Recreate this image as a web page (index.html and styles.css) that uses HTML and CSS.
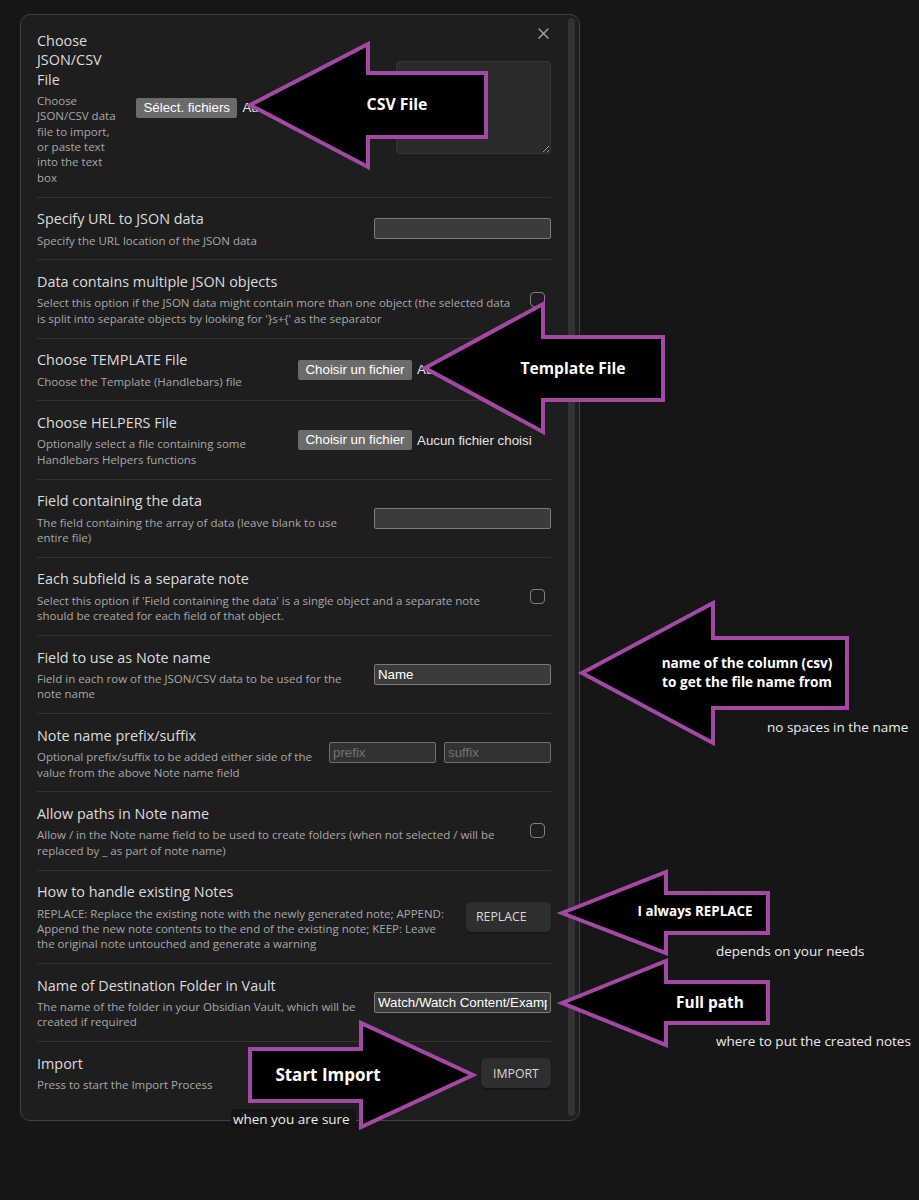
FILE: index.html
```html
<!DOCTYPE html>
<html lang="fr">
<head>
<meta charset="utf-8">
<title>Import JSON/CSV</title>
<link rel="stylesheet" href="styles.css">
</head>
<body>
<div class="page">
  <div class="modal">
    <div class="modal-close">
      <svg width="11" height="11" viewBox="0 0 11 11"><path d="M1 1L10 10M10 1L1 10" stroke="#a8a8a8" stroke-width="1.4" fill="none" stroke-linecap="round"/></svg>
    </div>
    <div class="modal-body">
      <div class="setting">
        <div class="info">
          <div class="name">Choose<br>JSON/CSV<br>File</div>
          <div class="desc">Choose<br>JSON/CSV data<br>file to import,<br>or paste text<br>into the text<br>box</div>
        </div>
        <div class="control">
          <div class="file file-wide"><span class="file-btn">Sélect. fichiers</span><span class="file-text">Aucun fichier choisi</span></div>
          <textarea class="textarea"></textarea>
        </div>
      </div>

      <div class="setting">
        <div class="info">
          <div class="name">Specify URL to JSON data</div>
          <div class="desc">Specify the URL location of the JSON data</div>
        </div>
        <div class="control"><input class="text-input" type="text" value=""></div>
      </div>

      <div class="setting">
        <div class="info">
          <div class="name">Data contains multiple JSON objects</div>
          <div class="desc">Select this option if the JSON data might contain more than one object (the selected data<br>is split into separate objects by looking for '}s+{' as the separator</div>
        </div>
        <div class="control"><span class="check"></span></div>
      </div>

      <div class="setting">
        <div class="info">
          <div class="name">Choose TEMPLATE File</div>
          <div class="desc">Choose the Template (Handlebars) file</div>
        </div>
        <div class="control">
          <div class="file"><span class="file-btn">Choisir un fichier</span><span class="file-text">Aucun fichier choisi</span></div>
        </div>
      </div>

      <div class="setting">
        <div class="info">
          <div class="name">Choose HELPERS File</div>
          <div class="desc">Optionally select a file containing some<br>Handlebars Helpers functions</div>
        </div>
        <div class="control">
          <div class="file"><span class="file-btn">Choisir un fichier</span><span class="file-text">Aucun fichier choisi</span></div>
        </div>
      </div>

      <div class="setting">
        <div class="info">
          <div class="name">Field containing the data</div>
          <div class="desc">The field containing the array of data (leave blank to use<br>entire file)</div>
        </div>
        <div class="control"><input class="text-input" type="text" value=""></div>
      </div>

      <div class="setting">
        <div class="info">
          <div class="name">Each subfield is a separate note</div>
          <div class="desc">Select this option if 'Field containing the data' is a single object and a separate note<br>should be created for each field of that object.</div>
        </div>
        <div class="control"><span class="check"></span></div>
      </div>

      <div class="setting">
        <div class="info">
          <div class="name">Field to use as Note name</div>
          <div class="desc">Field in each row of the JSON/CSV data to be used for the<br>note name</div>
        </div>
        <div class="control"><input class="text-input" type="text" value="Name"></div>
      </div>

      <div class="setting">
        <div class="info">
          <div class="name">Note name prefix/suffix</div>
          <div class="desc">Optional prefix/suffix to be added either side of the<br>value from the above Note name field</div>
        </div>
        <div class="control gap8">
          <input class="text-input small" type="text" placeholder="prefix">
          <input class="text-input small" type="text" placeholder="suffix">
        </div>
      </div>

      <div class="setting">
        <div class="info">
          <div class="name">Allow paths in Note name</div>
          <div class="desc">Allow / in the Note name field to be used to create folders (when not selected / will be<br>replaced by _ as part of note name)</div>
        </div>
        <div class="control"><span class="check"></span></div>
      </div>

      <div class="setting">
        <div class="info">
          <div class="name">How to handle existing Notes</div>
          <div class="desc">REPLACE: Replace the existing note with the newly generated note; APPEND:<br>Append the new note contents to the end of the existing note; KEEP: Leave<br>the original note untouched and generate a warning</div>
        </div>
        <div class="control"><div class="dropdown">REPLACE</div></div>
      </div>

      <div class="setting">
        <div class="info">
          <div class="name">Name of Destination Folder in Vault</div>
          <div class="desc">The name of the folder in your Obsidian Vault, which will be<br>created if required</div>
        </div>
        <div class="control"><input class="text-input" type="text" value="Watch/Watch Content/Examples"></div>
      </div>

      <div class="setting">
        <div class="info">
          <div class="name">Import</div>
          <div class="desc">Press to start the Import Process</div>
        </div>
        <div class="control"><div class="btn">IMPORT</div></div>
      </div>
    </div>
    <div class="scrollbar"></div>
  </div>
</div>

<svg class="annot" width="919" height="1200" viewBox="0 0 919 1200">
  <g class="arrow">
    <polygon points="250,105 368,44 368,73 486,73 486,137 368,137 368,167"/>
    <polygon points="425,368 543,304 543,337 663,337 663,400 543,400 543,432"/>
    <polygon points="582,673 713,603 713,638 847,638 847,708 713,708 713,743"/>
    <polygon points="562,913 666,872 666,893 768,893 768,933 666,933 666,953"/>
    <polygon points="562,1003 666,961 666,982 768,982 768,1023 666,1023 666,1045"/>
    <polygon points="250,1049 361,1049 361,1023 473,1075 361,1127 361,1101 250,1101"/>
  </g>
  <g class="label">
    <text x="397" y="110" font-size="15.8">CSV File</text>
    <text x="573" y="374" font-size="15.6">Template File</text>
    <text x="747" y="668" font-size="13.6">name of the column (csv)</text>
    <text x="747" y="687" font-size="13.6">to get the file name from</text>
    <text x="695" y="916" font-size="13.4">I always REPLACE</text>
    <text x="710" y="1008" font-size="15.4">Full path</text>
    <text x="328" y="1081" font-size="17">Start Import</text>
  </g>
  <rect class="caption-bg" x="231" y="1109" width="125" height="20"/>
  <g class="caption">
    <text x="767" y="732">no spaces in the name</text>
    <text x="716" y="956">depends on your needs</text>
    <text x="716" y="1046">where to put the created notes</text>
    <text x="233" y="1124">when you are sure</text>
  </g>
</svg>
</body>
</html>
```

FILE: styles.css
```css
html, body {
  margin: 0;
  background: #161616;
}

body {
  position: relative;
  font-family: "Open Sans", "Noto Sans", sans-serif;
  width: 919px;
  height: 1200px;
  overflow: hidden;
}

.page {
  padding: 14px 0 0 20px;
}

.modal {
  position: relative;
  display: flex;
  width: 560px;
  height: 1107px;
  box-sizing: border-box;
  border: 1px solid #424242;
  border-radius: 10px;
  background: #1e1e1e;
}

.modal-close {
  position: absolute;
  top: 13px;
  right: 30px;
  width: 11px;
  height: 11px;
  display: flex;
}

.modal-body {
  flex: 1;
  min-width: 0;
  padding: 4px 17px 0 16px;
}

.scrollbar {
  width: 7px;
  margin: 3px 4px 4px 0;
  background: #333333;
  border-radius: 4px;
}

.setting {
  display: flex;
  align-items: center;
  padding: 11.5px 0;
  border-top: 1px solid #333333;
}

.setting:first-child {
  border-top: 0;
}

.info {
  flex: 1 1 auto;
  min-width: 0;
  margin-right: 16px;
}

.name {
  font-size: 14.4px;
  line-height: 19.5px;
  color: #dcdcdc;
  white-space: nowrap;
}

.desc {
  font-size: 11.5px;
  line-height: 15.35px;
  padding-top: 4px;
  color: #a8a8a8;
  white-space: nowrap;
}

.control {
  flex: 0 0 auto;
  display: flex;
  align-items: center;
}

.gap8 {
  gap: 8px;
}

.file {
  display: flex;
  align-items: center;
  width: 253px;
  overflow: hidden;
  white-space: nowrap;
  font-family: "Liberation Sans", Arial, sans-serif;
  font-size: 13.3px;
  color: #e6e6e6;
}

.file-wide {
  width: 250px;
  margin-right: 10px;
}

.file-btn {
  height: 20px;
  line-height: 20px;
  padding: 0 7.5px;
  background: #6b6b6b;
  color: #ffffff;
  border-radius: 2px;
  margin-right: 5px;
}

.textarea {
  display: block;
  box-sizing: border-box;
  width: 155px;
  height: 93px;
  margin: 0;
  background: #2a2a2a;
  border: 1px solid #363636;
  border-radius: 4px;
  resize: both;
  outline: none;
}

.text-input {
  display: block;
  box-sizing: border-box;
  width: 177px;
  height: 21px;
  margin: 0;
  padding: 0 3px;
  background: #3b3b3b;
  border: 1px solid #7b7b7b;
  border-radius: 2px;
  color: #ffffff;
  font-family: "Liberation Sans", Arial, sans-serif;
  font-size: 13.3px;
  outline: none;
}

.text-input.small {
  width: 107px;
  background: #323232;
  border-color: #6e6e6e;
}

.text-input::placeholder {
  color: #727272;
}

.check {
  display: block;
  box-sizing: border-box;
  width: 15px;
  height: 15px;
  margin-right: 6px;
  border: 1px solid #808080;
  border-radius: 4px;
}

.dropdown {
  box-sizing: border-box;
  width: 85px;
  height: 30px;
  padding: 0 10px;
  display: flex;
  align-items: center;
  background: #2e2e2e;
  border-radius: 5px;
  box-shadow: 0 1px 2px rgba(0, 0, 0, 0.45);
  color: #dadada;
  font-size: 12.3px;
}

.btn {
  box-sizing: border-box;
  width: 70px;
  height: 30px;
  display: flex;
  align-items: center;
  justify-content: center;
  background: #2e2e2e;
  border-radius: 5px;
  box-shadow: 0 1px 2px rgba(0, 0, 0, 0.45);
  color: #dadada;
  font-size: 12.3px;
}

.annot {
  position: absolute;
  top: 0;
  left: 0;
  pointer-events: none;
}

.arrow polygon {
  fill: #000000;
  stroke: #a349a4;
  stroke-width: 4;
  stroke-linejoin: miter;
}

.label text {
  fill: #ffffff;
  font-family: "Open Sans", "Noto Sans", sans-serif;
  font-weight: 700;
  text-anchor: middle;
}

.caption-bg {
  fill: #141414;
}

.caption text {
  fill: #ececec;
  font-family: "Open Sans", "Noto Sans", sans-serif;
  font-size: 13.5px;
}
```
